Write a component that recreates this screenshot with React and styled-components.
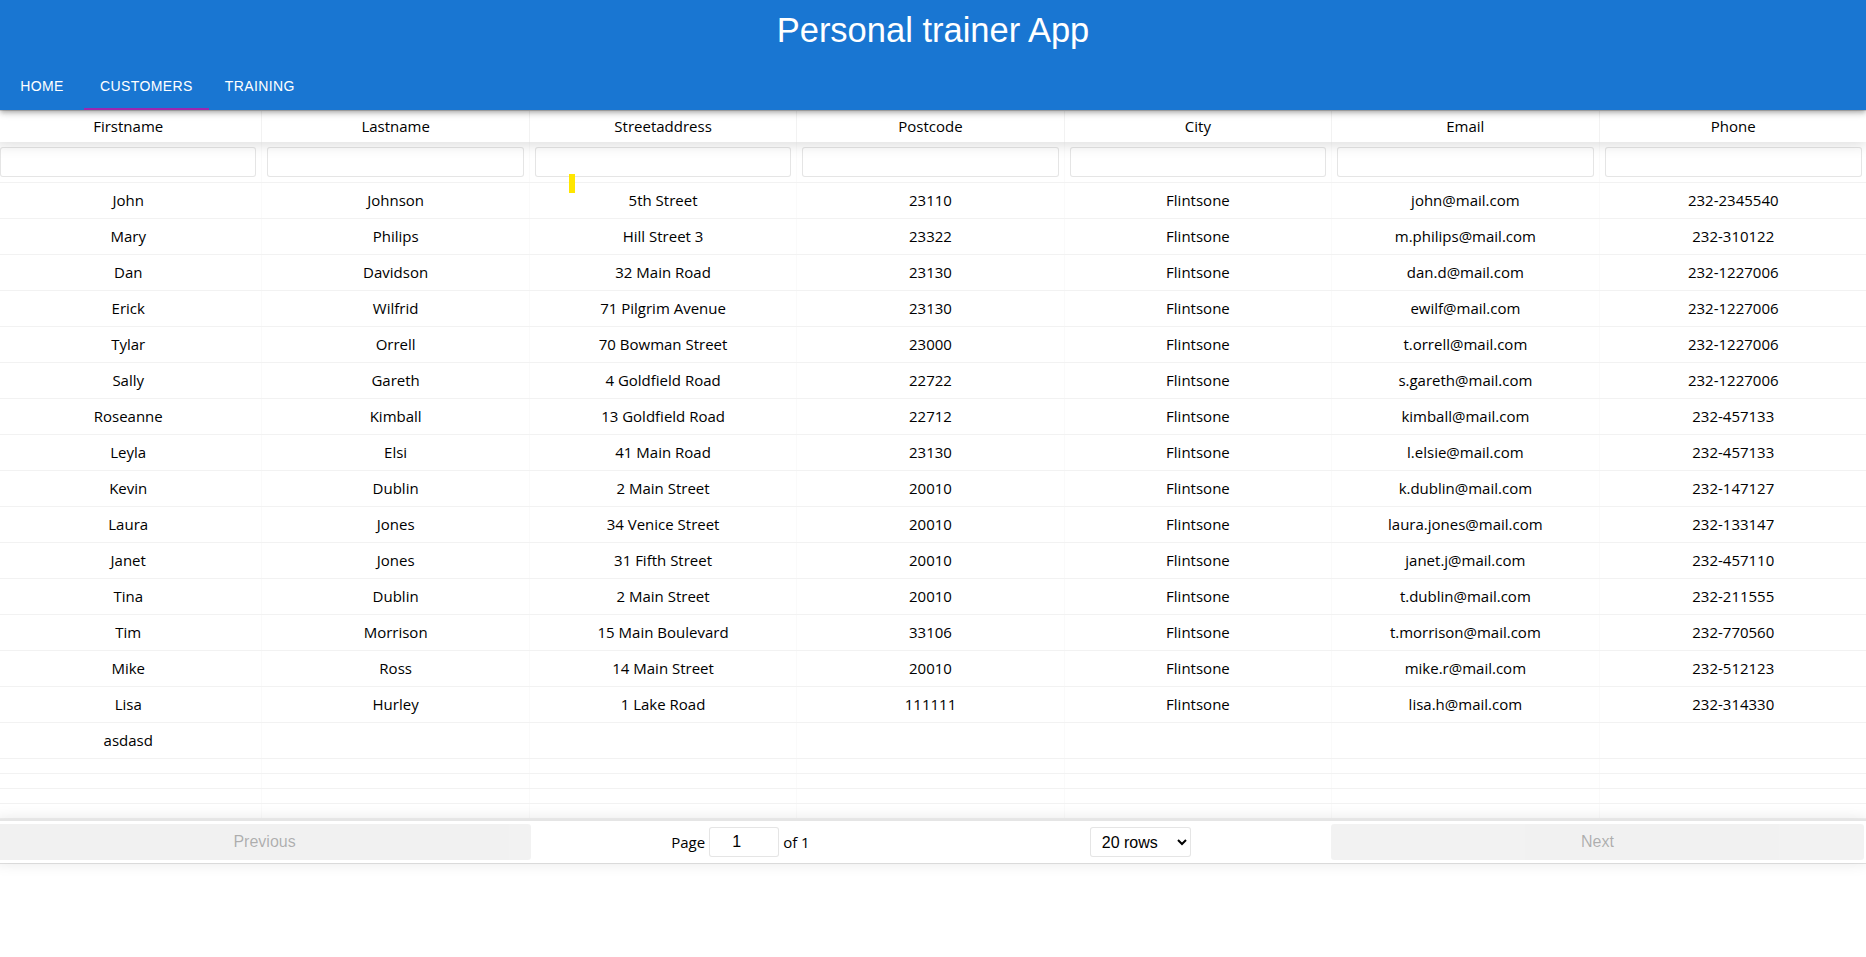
import React from 'react';
import styled, { createGlobalStyle } from 'styled-components';

const GlobalStyle = createGlobalStyle`
  body {
    margin: 0;
    background: #fff;
    overflow-x: hidden;
    font-family: "Open Sans", "Noto Sans", sans-serif;
    font-size: 15px;
    color: #000;
  }
`;

const StyledPage = styled.div`
  position: relative;
  min-height: 957px;
`;

const StyledAppBar = styled.header`
  background: #1976d2;
  color: #fff;
  position: relative;
  z-index: 3;
  box-shadow: 0px 2px 4px -1px rgba(0,0,0,0.2), 0px 4px 5px 0px rgba(0,0,0,0.14), 0px 1px 10px 0px rgba(0,0,0,0.12);
`;

const StyledTitle = styled.h1`
  margin: 0;
  height: 62px;
  line-height: 60px;
  text-align: center;
  font-family: "Liberation Sans", Arial, sans-serif;
  font-size: 34.5px;
  font-weight: 400;
`;

const StyledTabs = styled.nav`
  display: flex;
  height: 48px;
`;

const StyledTab = styled.button`
  position: relative;
  min-width: 84px;
  padding: 12px 16px;
  border: 0;
  background: transparent;
  color: #fff;
  font-family: "Liberation Sans", Arial, sans-serif;
  font-size: 14px;
  font-weight: 400;
  letter-spacing: 0.02857em;
  text-transform: uppercase;
  cursor: pointer;

  &::after {
    content: '';
    position: absolute;
    left: 0;
    right: 0;
    bottom: 0;
    height: 2px;
    background: ${props => (props.active ? '#9c27b0' : 'transparent')};
  }
`;

const StyledTable = styled.div`
  margin-left: -6px;
  width: calc(100% + 8px);
  border: 1px solid rgba(0,0,0,0.1);
  box-sizing: border-box;
`;

const StyledRow = styled.div`
  display: grid;
  grid-template-columns: repeat(7, 1fr);
`;

const StyledHeader = styled(StyledRow)`
  position: relative;
  z-index: 2;
  background: #fff;
  box-shadow: 0 2px 15px 0 rgba(0,0,0,0.15);
`;

const StyledFilters = styled(StyledRow)`
  border-bottom: 1px solid rgba(0,0,0,0.05);
`;

const StyledBodyRow = styled(StyledRow)`
  border-bottom: 1px solid rgba(0,0,0,0.05);
`;

const StyledTh = styled.div`
  padding: 5px;
  line-height: 21px;
  text-align: center;
  border-right: 1px solid rgba(0,0,0,0.05);
  overflow: hidden;

  &:last-child {
    border-right: 0;
  }
`;

const StyledFilterCell = styled.div`
  padding: 5px;
  border-right: 1px solid rgba(0,0,0,0.02);

  &:last-child {
    border-right: 0;
  }
`;

const StyledInput = styled.input`
  box-sizing: border-box;
  width: ${props => props.width || '100%'};
  height: 30px;
  padding: 5px 7px;
  border: 1px solid rgba(0,0,0,0.1);
  border-radius: 3px;
  background: #fff;
  font-family: "Liberation Sans", Arial, sans-serif;
  font-size: 16px;
  text-align: ${props => props.center ? 'center' : 'left'};
  outline: none;
`;

const StyledTd = styled.div`
  padding: 7px 5px;
  line-height: 21px;
  height: ${props => props.pad ? '0' : 'auto'};
  text-align: center;
  white-space: nowrap;
  overflow: hidden;
  border-right: 1px solid rgba(0,0,0,0.02);

  &:last-child {
    border-right: 0;
  }
`;

const StyledPagination = styled.div`
  position: relative;
  z-index: 1;
  display: flex;
  align-items: stretch;
  padding: 3px;
  border-top: 2px solid rgba(0,0,0,0.1);
  box-shadow: 0 0 15px 0 rgba(0,0,0,0.1);
`;

const StyledSide = styled.div`
  flex: 1;
  text-align: center;
`;

const StyledPageButton = styled.button`
  display: block;
  width: 100%;
  height: 100%;
  border: 0;
  border-radius: 3px;
  padding: 6px;
  background: rgba(0,0,0,0.1);
  color: rgba(0,0,0,0.6);
  font-family: "Liberation Sans", Arial, sans-serif;
  font-size: 16px;
  opacity: 0.5;
  cursor: default;
`;

const StyledCenter = styled.div`
  flex: 1.5;
  display: flex;
  align-items: center;
  justify-content: space-around;
`;

const StyledPageInfo = styled.span`
  display: inline-flex;
  align-items: center;
  gap: 4px;
  margin: 3px 10px;
  white-space: nowrap;
`;

const StyledSelect = styled.select`
  margin: 3px 10px;
  height: 30px;
  padding: 5px 7px;
  border: 1px solid rgba(0,0,0,0.1);
  border-radius: 3px;
  background: #fff;
  font-family: "Liberation Sans", Arial, sans-serif;
  font-size: 16px;
  color: #000;
  outline: none;
`;

const StyledMarker = styled.span`
  position: absolute;
  left: 569px;
  top: 174px;
  width: 6px;
  height: 19px;
  background: #ffe600;
  z-index: 4;
`;

const columns = ['Firstname', 'Lastname', 'Streetaddress', 'Postcode', 'City', 'Email', 'Phone'];

const customers = [
  ['John', 'Johnson', '5th Street', '23110', 'Flintsone', 'john@mail.com', '232-2345540'],
  ['Mary', 'Philips', 'Hill Street 3', '23322', 'Flintsone', 'm.philips@mail.com', '232-310122'],
  ['Dan', 'Davidson', '32 Main Road', '23130', 'Flintsone', 'dan.d@mail.com', '232-1227006'],
  ['Erick', 'Wilfrid', '71 Pilgrim Avenue', '23130', 'Flintsone', 'ewilf@mail.com', '232-1227006'],
  ['Tylar', 'Orrell', '70 Bowman Street', '23000', 'Flintsone', 't.orrell@mail.com', '232-1227006'],
  ['Sally', 'Gareth', '4 Goldfield Road', '22722', 'Flintsone', 's.gareth@mail.com', '232-1227006'],
  ['Roseanne', 'Kimball', '13 Goldfield Road', '22712', 'Flintsone', 'kimball@mail.com', '232-457133'],
  ['Leyla', 'Elsi', '41 Main Road', '23130', 'Flintsone', 'l.elsie@mail.com', '232-457133'],
  ['Kevin', 'Dublin', '2 Main Street', '20010', 'Flintsone', 'k.dublin@mail.com', '232-147127'],
  ['Laura', 'Jones', '34 Venice Street', '20010', 'Flintsone', 'laura.jones@mail.com', '232-133147'],
  ['Janet', 'Jones', '31 Fifth Street', '20010', 'Flintsone', 'janet.j@mail.com', '232-457110'],
  ['Tina', 'Dublin', '2 Main Street', '20010', 'Flintsone', 't.dublin@mail.com', '232-211555'],
  ['Tim', 'Morrison', '15 Main Boulevard', '33106', 'Flintsone', 't.morrison@mail.com', '232-770560'],
  ['Mike', 'Ross', '14 Main Street', '20010', 'Flintsone', 'mike.r@mail.com', '232-512123'],
  ['Lisa', 'Hurley', '1 Lake Road', '111111', 'Flintsone', 'lisa.h@mail.com', '232-314330'],
  ['asdasd', '', '', '', '', '', '']
];

const tabs = ['Home', 'Customers', 'Training'];
const padRows = 4;

export default function App () {
  return (
    <StyledPage>
      <GlobalStyle />
      <StyledAppBar>
        <StyledTitle>Personal trainer App</StyledTitle>
        <StyledTabs>
          {tabs.map(tab => (
            <StyledTab key={tab} active={tab === 'Customers'}>{tab}</StyledTab>
          ))}
        </StyledTabs>
      </StyledAppBar>

      <StyledTable>
        <StyledHeader>
          {columns.map(col => <StyledTh key={col}>{col}</StyledTh>)}
        </StyledHeader>
        <StyledFilters>
          {columns.map(col => (
            <StyledFilterCell key={col}>
              <StyledInput type='text' />
            </StyledFilterCell>
          ))}
        </StyledFilters>
        {customers.map((row, i) => (
          <StyledBodyRow key={i}>
            {row.map((cell, j) => <StyledTd key={j}>{cell}</StyledTd>)}
          </StyledBodyRow>
        ))}
        {Array.from({ length: padRows }).map((_, i) => (
          <StyledBodyRow key={'pad' + i}>
            {columns.map(col => <StyledTd pad key={col} />)}
          </StyledBodyRow>
        ))}
        <StyledPagination>
          <StyledSide>
            <StyledPageButton disabled>Previous</StyledPageButton>
          </StyledSide>
          <StyledCenter>
            <StyledPageInfo>
              Page
              <StyledInput type='number' width='70px' center defaultValue='1' />
              of 1
            </StyledPageInfo>
            <StyledSelect defaultValue='20'>
              <option value='5'>5 rows</option>
              <option value='10'>10 rows</option>
              <option value='20'>20 rows</option>
              <option value='25'>25 rows</option>
              <option value='50'>50 rows</option>
              <option value='100'>100 rows</option>
            </StyledSelect>
          </StyledCenter>
          <StyledSide>
            <StyledPageButton disabled>Next</StyledPageButton>
          </StyledSide>
        </StyledPagination>
      </StyledTable>
      <StyledMarker />
    </StyledPage>
  );
}
